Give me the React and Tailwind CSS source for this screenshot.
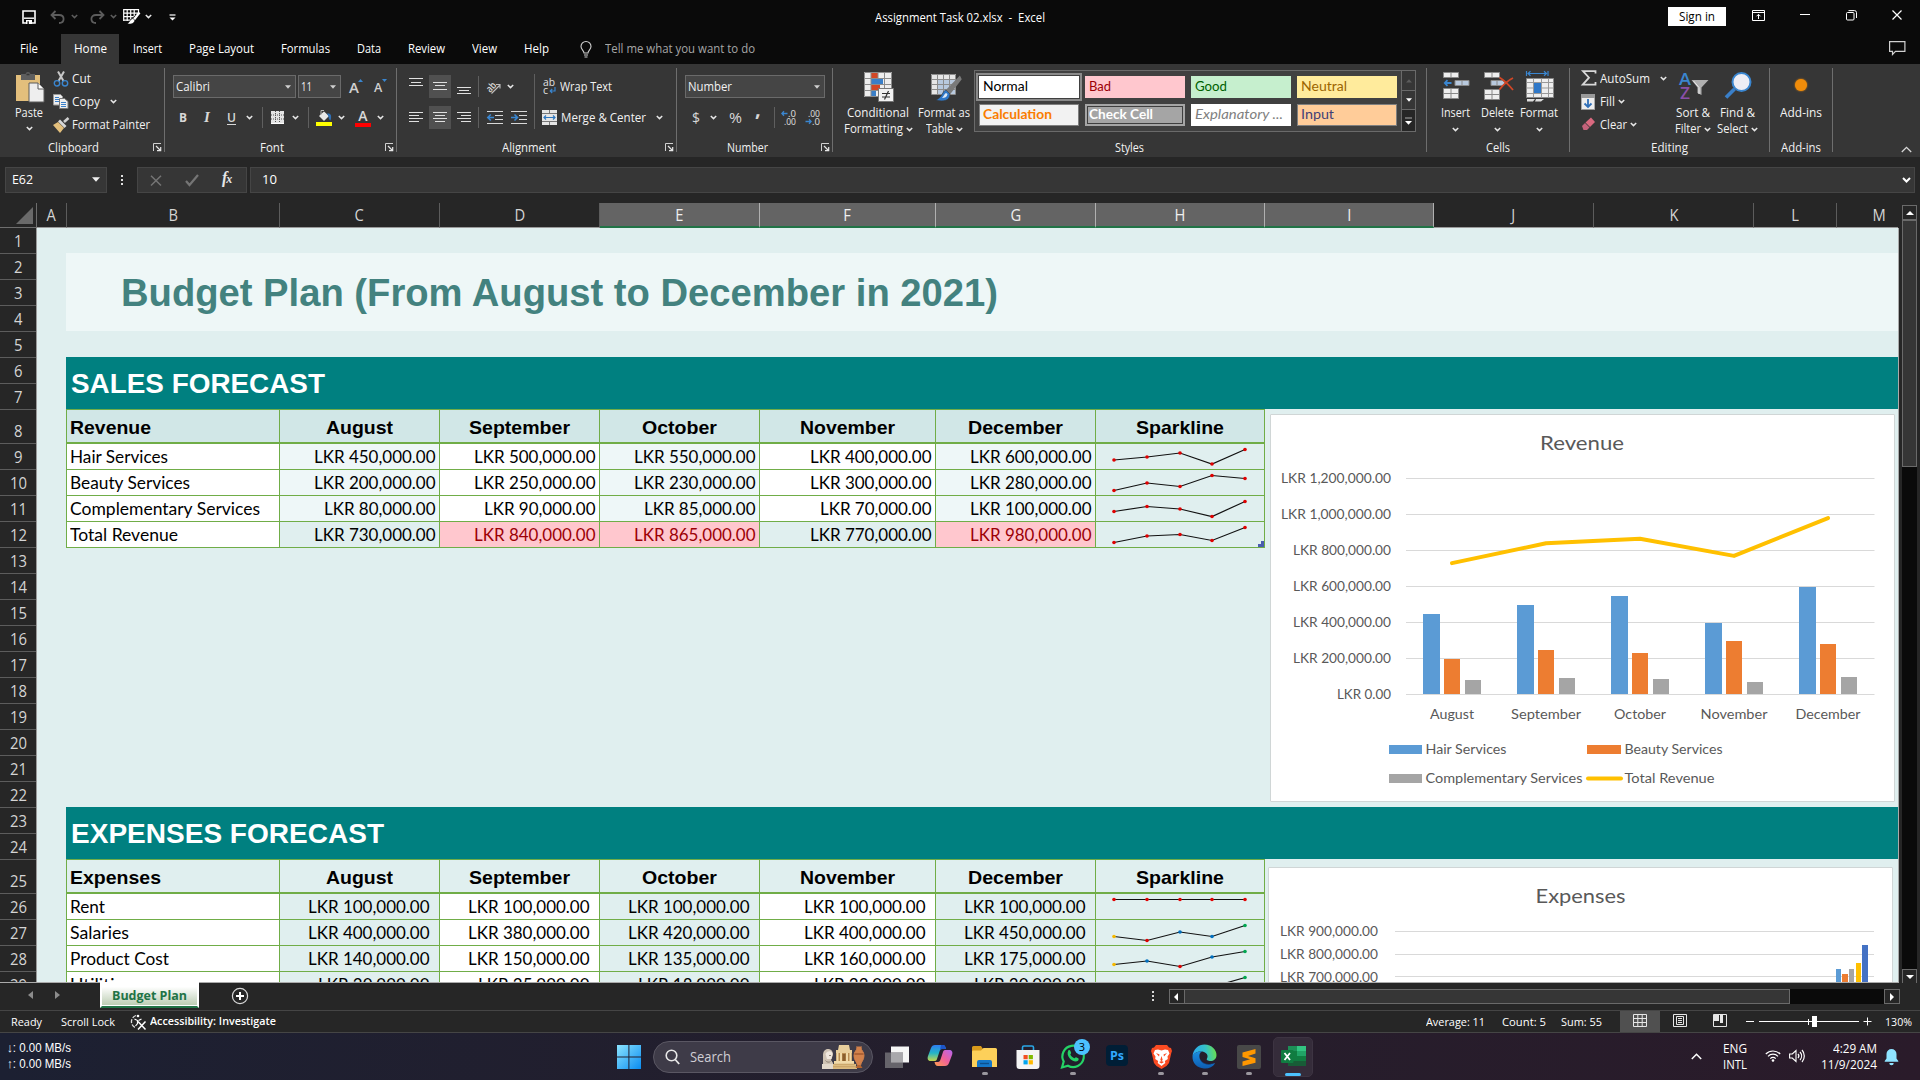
import React, { useLayoutEffect, useRef } from "react";

/* Single line of text, condensed or widened to fill the width given by its class. */
function T({ className = "", children }) {
  const outer = useRef(null);
  const inner = useRef(null);
  useLayoutEffect(() => {
    inner.current.style.transform = "none";
    const natural = inner.current.getBoundingClientRect().width;
    const wanted = outer.current.getBoundingClientRect().width;
    if (natural > 0) inner.current.style.transform = `scaleX(${wanted / natural})`;
  }, [children]);
  return (
    <span ref={outer} className={"inline-block shrink-0 whitespace-nowrap " + className}>
      <span ref={inner} className="inline-block origin-left whitespace-pre">{children}</span>
    </span>
  );
}

function Svg({ w, h, className = "", children }) {
  return (
    <svg width={w} height={h} viewBox={`0 0 ${w} ${h}`} fill="none" className={"block shrink-0 overflow-visible " + className}>
      {children}
    </svg>
  );
}

function Chev({ className = "", c = "#e6e6e6" }) {
  return (
    <Svg w={7} h={5} className={className}>
      <path d="M.8 1l2.7 2.6L6.2 1" stroke={c} strokeWidth="1.5" />
    </Svg>
  );
}

function Tri({ className = "", c = "#d0d0d0" }) {
  return (
    <Svg w={6} h={4} className={className}>
      <path d="M0 .3h6L3 3.8z" fill={c} />
    </Svg>
  );
}

/* ---------- title bar and tabs ---------- */

function TitleBar() {
  return (
    <div className="flex h-[34px] items-start bg-[#0a0a0a] text-[12px] text-white">
      <Svg w={14} h={14} className="ml-[22px] mt-[10px]">
        <path d="M1 1h12v12H1z" stroke="#fff" strokeWidth="1.6" />
        <path d="M2 8.2h10" stroke="#fff" strokeWidth="1.4" />
        <path d="M4 10h6v4H4z" fill="#fff" />
        <path d="M5.5 11.3h1.3V14H5.500z" fill="#0a0a0a" />
      </Svg>
      <Svg w={15} h={14} className="ml-[14px] mt-[10px]">
        <path d="M5.500 1L1.500 5l4 4M1.800 5H9c3 0 4.600 1.800 4.600 4S12 13 9 13" stroke="#5c5c5c" strokeWidth="1.800" />
      </Svg>
      <Chev className="ml-[6px] mt-[14px]" c="#5c5c5c" />
      <Svg w={15} h={14} className="ml-[12px] mt-[10px]">
        <path d="M9.500 1l4 4-4 4M13.200 5H6C3 5 1.400 6.800 1.400 9S3 13 6 13" stroke="#5c5c5c" strokeWidth="1.800" />
      </Svg>
      <Chev className="ml-[5px] mt-[14px]" c="#5c5c5c" />
      <Svg w={17} h={17} className="ml-[6px] mt-[8px]">
        <path d="M.7 1.700h15M.7 5.200h15M.7 8.700h10M.7 12.200h7M.7 1v12M4.200 1v12M7.700 1v10M11.200 1v7M15.500 1v4" stroke="#fff" strokeWidth="1.200" />
        <path d="M16.500 4.500l-5.500 7" stroke="#fff" strokeWidth="2.400" />
        <path d="M9.800 10.500c-2.500.5-3 3.500-5.300 5 2.500 1.300 7 .5 7.300-3.500z" fill="#fff" stroke="#0a0a0a" strokeWidth=".5" />
      </Svg>
      <Chev className="ml-[5px] mt-[14px]" />
      <Svg w={7} h={7} className="ml-[17px] mt-[14px]">
        <path d="M.5 1h6" stroke="#fff" strokeWidth="1.200" />
        <path d="M.5 3.500h6L3.500 6.500z" fill="#fff" />
      </Svg>
      <T className="ml-[699px] mt-[9px] w-[170px] leading-[17px]">{"Assignment Task 02.xlsx  -  Excel"}</T>
      <div className="ml-[623px] mt-[7px] flex h-[19px] w-[58px] items-center justify-center bg-white text-black">
        <T className="w-[36px] leading-[17px]">Sign in</T>
      </div>
      <Svg w={13} h={11} className="ml-[26px] mt-[10px]">
        <path d="M.5.5h12v10H.5zM.5 2.500h12" stroke="#fff" />
        <path d="M6.500 9V4.500M4.500 6.300l2-2 2 2" stroke="#fff" />
      </Svg>
      <div className="ml-[35px] mt-[14px] h-px w-[10px] bg-white" />
      <Svg w={11} h={11} className="ml-[36px] mt-[10px]">
        <rect x=".5" y="2.500" width="7.500" height="7.500" rx="1" stroke="#fff" />
        <path d="M2.500.6H8.500a2 2 0 0 1 2 2V8" stroke="#fff" />
      </Svg>
      <Svg w={10} h={10} className="ml-[35px] mt-[10px]">
        <path d="M.5.5l9 9M9.500.5l-9 9" stroke="#fff" strokeWidth="1.200" />
      </Svg>
    </div>
  );
}

function Tabs() {
  return (
    <div className="flex h-[30px] items-center bg-[#0a0a0a] text-[12px] leading-[30px] text-white">
      <T className="ml-[20px] w-[18px]">File</T>
      <div className="ml-[23px] flex h-[30px] w-[58px] justify-center bg-[#363636]">
        <T className="w-[33px]">Home</T>
      </div>
      <T className="ml-[14px] w-[29px]">Insert</T>
      <T className="ml-[27px] w-[65px]">Page Layout</T>
      <T className="ml-[27px] w-[49px]">Formulas</T>
      <T className="ml-[27px] w-[24px]">Data</T>
      <T className="ml-[27px] w-[37px]">Review</T>
      <T className="ml-[27px] w-[25px]">View</T>
      <T className="ml-[27px] w-[25px]">Help</T>
      <Svg w={12} h={17} className="ml-[31px]">
        <path d="M4 12c0-2.500-3-3.500-3-6.500a5 5 0 0 1 10 0c0 3-3 4-3 6.500zM4 14h4M4.500 16h3" stroke="#d0d0d0" strokeWidth="1.100" />
      </Svg>
      <T className="ml-[13px] w-[150px] text-[#a6a6a6]">Tell me what you want to do</T>
      <Svg w={17} h={15} className="ml-[1134px] mt-[-2px]">
        <path d="M.6.6h15.300v9.800H6.500L3.500 13.500v-3.100H.6z" stroke="#d0d0d0" strokeWidth="1.200" />
      </Svg>
    </div>
  );
}

/* ---------- ribbon ---------- */

function Group({ className, label, labelClass, launcher, children }) {
  return (
    <div className={"mt-[4px] flex h-[84px] shrink-0 flex-col border-r border-[#6e6e6e] " + className}>
      <div className="flex h-[75px] shrink-0 items-start">{children}</div>
      <div className="flex h-[9px] shrink-0 items-center leading-[10px]">
        <div className="flex flex-1 justify-center">
          <T className={labelClass}>{label}</T>
        </div>
        {launcher && (
          <Svg w={9} h={9} className="mr-[2px]">
            <path d="M.5 8V.5H8" stroke="#d0d0d0" />
            <path d="M3 3l4.500 4.500M7.700 4v3.700H4" stroke="#e6e6e6" strokeWidth="1.200" />
          </Svg>
        )}
      </div>
    </div>
  );
}

function VSep({ className = "" }) {
  return <div className={"h-[21px] w-px shrink-0 bg-[#5f5f5f] " + className} />;
}

function BigButton({ className, icon, line1, w1, line2, w2 }) {
  return (
    <div className={"flex shrink-0 flex-col items-center " + className}>
      <div className="mt-[3px] flex h-[32px] items-start justify-center">{icon}</div>
      <T className={"mt-[2px] leading-[16px] " + w1}>{line1}</T>
      <div className="flex h-[16px] items-center gap-[3px]">
        {line2 && <T className={"leading-[16px] " + w2}>{line2}</T>}
        <Chev />
      </div>
    </div>
  );
}

function Lines({ on, rows }) {
  return (
    <Svg w={22} h={23} className={on ? "bg-[#505050]" : ""}>
      {rows.map(([x1, x2, y]) => (
        <path key={y} d={`M${x1} ${y}H${x2}`} stroke="#e0e0e0" strokeWidth="1" />
      ))}
    </Svg>
  );
}

function Indent({ left }) {
  return (
    <Svg w={16} h={13}>
      <path d="M0 .5h16M8 4.500h8M8 8.500h8M0 12.500h16" stroke="#d8d8d8" />
      <path d={left ? "M7 6.500H1M3.800 3.500l-3 3 3 3" : "M0 6.500h6M3.500 3.500l3 3-3 3"} stroke="#3a86d0" strokeWidth="1.600" />
    </Svg>
  );
}

function ClipboardGroup() {
  return (
    <Group className="w-[165px]" label="Clipboard" labelClass="w-[51px] ml-[-7px]" launcher>
      <div className="ml-[12px] flex w-[34px] flex-col items-center">
        <Svg w={30} h={31} className="mt-[3px]">
          <path d="M2 4h24v26H2z" fill="#e3bf7c" />
          <path d="M7 3h4.500a2.600 2.600 0 0 1 5 0H21v6H7z" fill="#5e5e5e" />
          <path d="M12.500 3.500h3" stroke="#363636" strokeWidth="1.500" />
          <path d="M15 12h9l6 6v13H15z" fill="#eee" stroke="#5a5a5a" />
          <path d="M24 12v6h6" fill="#fff" stroke="#5a5a5a" />
        </Svg>
        <T className="mt-[3px] w-[28px] leading-[16px]">Paste</T>
        <Chev className="mt-[5px]" />
      </div>
      <div className="ml-[7px] mt-[-1px] flex flex-col">
        <div className="flex h-[23px] items-center">
          <Svg w={16} h={16}>
            <path d="M5 .5l5.500 9.500M11 .5L5.500 10" stroke="#c8c8c8" strokeWidth="2" />
            <circle cx="4" cy="12.300" r="2.700" stroke="#3a86d0" strokeWidth="1.400" />
            <circle cx="12" cy="12.300" r="2.700" stroke="#3a86d0" strokeWidth="1.400" />
          </Svg>
          <T className="ml-[3px] w-[19px]">Cut</T>
        </div>
        <div className="flex h-[23px] items-center">
          <Svg w={16} h={15}>
            <path d="M.5.5h7l2 2v8.500h-9z" fill="#eee" stroke="#999" />
            <path d="M2 3.500h4M2 5.500h4M2 7.500h4" stroke="#3a7fc8" />
            <path d="M6.500 4.500h5l3.500 3V14.500H6.500z" fill="#eee" stroke="#777" />
            <path d="M8 8.500h5M8 10.500h5M8 12.500h5" stroke="#3a7fc8" />
          </Svg>
          <T className="ml-[3px] w-[28px]">Copy</T>
          <Chev className="ml-[10px]" />
        </div>
        <div className="flex h-[23px] items-center">
          <Svg w={16} h={16}>
            <path d="M15.500 1l-4.500 4" stroke="#d0d0d0" strokeWidth="2.600" />
            <path d="M7 2.500l6.500 6.500-2 2L5 4.500z" fill="#d8d8d8" />
            <path d="M5 5l6 6-4 5L0 8z" fill="#e3bf7c" />
          </Svg>
          <T className="ml-[3px] w-[78px]">Format Painter</T>
        </div>
      </div>
    </Group>
  );
}

function FontGroup() {
  return (
    <Group className="w-[232px]" label="Font" labelClass="w-[24px] ml-[-6px]" launcher>
      <div className="ml-[8px] flex flex-col">
        <div className="mt-[7px] flex h-[23px] items-center">
          <div className="flex h-[23px] w-[123px] items-center justify-between border border-[#6a6a6a] bg-[#454545] pl-[2px] pr-[4px]">
            <T className="w-[34px]">Calibri</T>
            <Tri />
          </div>
          <div className="ml-[2px] flex h-[23px] w-[43px] items-center justify-between border border-[#6a6a6a] bg-[#454545] pl-[2px] pr-[4px]">
            <T className="w-[11px]">11</T>
            <Tri />
          </div>
          <div className="ml-[8px] flex h-[23px] w-[14px] items-start">
            <span className="mt-[3px] inline-block text-[15px] font-semibold leading-[18px] text-[#d0d0d0]">A</span>
            <Svg w={5} h={3} className="ml-[-1px] mt-[4px]"><path d="M0 3h5L2.500 0z" fill="#3a86d0" /></Svg>
          </div>
          <div className="ml-[11px] flex h-[23px] w-[14px] items-start">
            <span className="mt-[4px] inline-block text-[12.500px] font-semibold leading-[18px] text-[#d0d0d0]">A</span>
            <Svg w={5} h={3} className="mt-[4px]"><path d="M0 0h5L2.500 3z" fill="#3a86d0" /></Svg>
          </div>
        </div>
        <div className="mt-[8px] flex h-[23px] items-center text-[13px] text-[#d8d8d8]">
          <T className="ml-[6px] w-[8px] font-bold">B</T>
          <span className="ml-[17px] w-[7px] font-['Liberation_Serif'] text-[15px] font-bold italic">I</span>
          <T className="ml-[16px] w-[9px] border-b border-[#d8d8d8] font-semibold leading-[14px]">U</T>
          <Chev className="ml-[10px]" />
          <VSep className="ml-[9px]" />
          <Svg w={13} h={13} className="ml-[8px]">
            <path d="M0 0h13v13H0z" fill="#e4e4e4" />
            <path d="M0 4h13M0 8h13M4.500 0v11M8.500 0v11" stroke="#555" strokeWidth="1" strokeDasharray="1 1" />
            <path d="M0 12.500h13" stroke="#fff" />
          </Svg>
          <Chev className="ml-[8px]" />
          <VSep className="ml-[9px]" />
          <Svg w={16} h={17} className="ml-[7px]">
            <path d="M3 7l5-4.500L13 7l-5 5z" fill="#e8e8e8" />
            <path d="M5 6V1.500h3" stroke="#bbb" />
            <path d="M11 4.500c4-.5 5 2 3.500 7-1-.5-2-2-2-4z" fill="#2f6fb5" />
            <path d="M0 13h16v4H0z" fill="#ff0" />
          </Svg>
          <Chev className="ml-[6px]" />
          <div className="ml-[10px] flex w-[16px] flex-col items-center">
            <span className="text-[14px] font-semibold leading-[13px]">A</span>
            <div className="mt-px h-[4px] w-[16px] bg-[#f00]" />
          </div>
          <Chev className="ml-[6px]" />
        </div>
      </div>
    </Group>
  );
}

function AlignmentGroup() {
  return (
    <Group className="w-[280px]" label="Alignment" labelClass="w-[54px] ml-[-4px]" launcher>
      <div className="ml-[8px] flex w-[129px] flex-col">
        <div className="mt-[7px] flex h-[23px] items-center gap-[2px]">
          <Lines rows={[[4, 18, 3.5], [6, 16, 7.5], [4, 18, 10.5]]} />
          <Lines on rows={[[4, 18, 7.5], [6, 16, 10.5], [4, 18, 14.5]]} />
          <Lines rows={[[4, 18, 12.5], [6, 16, 15.5], [4, 18, 18.5]]} />
          <VSep className="ml-px" />
          <Svg w={16} h={16} className="ml-[5px]">
            <text x="0" y="11.500" transform="rotate(-48 5 8)" fontSize="10" fill="#d8d8d8" fontWeight="600" textLength="10" lengthAdjust="spacingAndGlyphs">ab</text>
            <path d="M5.500 14.500L13.500 6.500M10 5.500h4v4" stroke="#c0c0c0" strokeWidth="1.100" />
          </Svg>
          <Chev className="ml-[3px]" />
        </div>
        <div className="mt-[8px] flex h-[23px] items-center gap-[2px]">
          <Lines rows={[[4, 18, 6.5], [4, 14, 9.5], [4, 18, 12.5], [4, 14, 15.5]]} />
          <Lines on rows={[[4, 18, 6.5], [6, 16, 9.5], [4, 18, 12.5], [6, 16, 15.5]]} />
          <Lines rows={[[4, 18, 6.5], [8, 18, 9.5], [4, 18, 12.5], [8, 18, 15.5]]} />
          <VSep className="ml-px" />
          <div className="ml-[6px] flex gap-[8px]">
            <Indent left />
            <Indent />
          </div>
        </div>
      </div>
      <div className="mt-[6px] h-[55px] w-px bg-[#5f5f5f]" />
      <div className="flex flex-col">
        <div className="mt-[7px] flex h-[23px] items-center">
          <Svg w={14} h={16} className="ml-[8px] mt-[-2px]">
            <text x="0" y="7.500" fontSize="10.500" fill="#e0e0e0" textLength="12" lengthAdjust="spacingAndGlyphs">ab</text>
            <text x="0" y="15.500" fontSize="10.500" fill="#e0e0e0">c</text>
            <path d="M12 9v4H7.500M9.200 11l-2 2 2 2" stroke="#3a86d0" strokeWidth="1.200" />
          </Svg>
          <T className="ml-[3px] w-[52px]">Wrap Text</T>
        </div>
        <div className="mt-[8px] flex h-[23px] items-center">
          <Svg w={15} h={15} className="ml-[7px]">
            <path d="M0 0h15v15H0z" fill="#e6e6e6" />
            <path d="M0 3.500h15M0 11.500h15M7.500 0v3.500M7.500 11.500V15" stroke="#777" />
            <path d="M2 7.500h11M4 5.500l-2 2 2 2M11 5.500l2 2-2 2" stroke="#2f78c0" strokeWidth="1.200" />
          </Svg>
          <T className="ml-[4px] w-[85px]">Merge &amp; Center</T>
          <Chev className="ml-[10px]" />
        </div>
      </div>
    </Group>
  );
}

function NumberGroup() {
  return (
    <Group className="w-[156px]" label="Number" labelClass="w-[41px] ml-[-3px]" launcher>
      <div className="ml-[8px] flex flex-col">
        <div className="mt-[7px] flex h-[23px] w-[140px] items-center justify-between border border-[#6a6a6a] bg-[#454545] pl-[2px] pr-[4px]">
          <T className="w-[44px]">Number</T>
          <Tri />
        </div>
        <div className="mt-[8px] flex h-[23px] items-center text-[15px] text-[#d8d8d8]">
          <T className="ml-[7px] w-[8px]">$</T>
          <Chev className="ml-[10px]" />
          <T className="ml-[12px] w-[13px]">%</T>
          <span className="ml-[13px] mt-[-17px] w-[5px] text-[20px] font-bold leading-[20px]">,</span>
          <VSep className="ml-[14px]" />
          <Svg w={16} h={15} className="ml-[6px]">
            <text x="7" y="6.500" fontSize="9" fill="#e0e0e0" textLength="8" lengthAdjust="spacingAndGlyphs">.0</text>
            <text x="3" y="14.500" fontSize="9" fill="#e0e0e0" textLength="12" lengthAdjust="spacingAndGlyphs">.00</text>
            <path d="M6.500 3.500H1M3 1.300L.9 3.500 3 5.700" stroke="#3a86d0" strokeWidth="1.300" />
          </Svg>
          <Svg w={16} h={15} className="ml-[8px]">
            <text x="3" y="6.500" fontSize="9" fill="#e0e0e0" textLength="12" lengthAdjust="spacingAndGlyphs">.00</text>
            <text x="7" y="14.500" fontSize="9" fill="#e0e0e0" textLength="8" lengthAdjust="spacingAndGlyphs">.0</text>
            <path d="M.5 11.500h5.500M4 9.300l2.100 2.200L4 13.700" stroke="#3a86d0" strokeWidth="1.300" />
          </Svg>
        </div>
      </div>
    </Group>
  );
}

const styleCells = [
  ["Normal", "bg-white text-black outline outline-2 outline-offset-[1px] outline-[#8a8a8a]", "w-[45px]"],
  ["Bad", "bg-[#ffc7ce] text-[#9c0006]", "w-[22px]"],
  ["Good", "bg-[#c6efce] text-[#006100]", "w-[32px]"],
  ["Neutral", "bg-[#ffeb9c] text-[#9c6500]", "w-[46px]"],
  ["Calculation", "border border-[#7f7f7f] bg-[#f2f2f2] font-bold text-[#fa7d00]", "w-[69px]"],
  ["Check Cell", "border-[3px] border-double border-[#3f3f3f] bg-[#a5a5a5] outline outline-1 outline-[#a5a5a5] outline-offset-[-1px] font-bold text-white", "w-[64px]"],
  ["Explanatory ...", "bg-white italic text-[#7f7f7f]", "w-[88px]"],
  ["Input", "border border-[#7f7f7f] bg-[#ffcc99] text-[#3f3f76]", "w-[33px]"],
];

function StylesGroup() {
  return (
    <Group className="w-[594px]" label="Styles" labelClass="w-[29px] ml-[-1px]">
      <BigButton
        className="ml-[10px] w-[70px]"
        line1="Conditional" w1="w-[62px]" line2="Formatting" w2="w-[59px]"
        icon={
          <Svg w={31} h={31} className="ml-[3px]">
            <path d="M0 1h28v25H0z" fill="#eee" />
            <path d="M7 1h7v6H7zM7 14h9v6H7z" fill="#d24726" />
            <path d="M7 7.500h12v6H7z" fill="#3a7fc8" />
            <path d="M7 20h5v6H7z" fill="#3a7fc8" />
            <path d="M.5 1.500h27v24H.5zM0 7.500h28M0 13.500h28M0 19.500h28M7 1v25M14 1v6M20.500 1v25" stroke="#8c8c8c" />
            <path d="M14.500 17.500h15v13h-15z" fill="#f2f2f2" stroke="#777" />
            <path d="M18 22.500h8M18 26h8M24.500 20l-4 8.500" stroke="#333" strokeWidth="1.200" />
          </Svg>
        }
      />
      <BigButton
        className="ml-[5px] w-[52px]"
        line1="Format as" w1="w-[52px]" line2="Table" w2="w-[27px]"
        icon={
          <Svg w={30} h={31} className="ml-[4px]">
            <path d="M0 3h25v20H0z" fill="#e6e6e6" />
            <path d="M6 8h19v15H6z" fill="#b8c9de" />
            <path d="M.5 3.500h24v20H.5zM0 8.500h25M0 13.500h25M0 18.500h25M6.500 3v20M12.500 3v20M18.500 3v20" stroke="#8c8c8c" />
            <path d="M29 8L19 21l-2-2L28.500 7z" stroke="#7a7a7a" strokeWidth="3" />
            <path d="M15 19c-4 1-3 7-10 10 7 2 14 1 14-6z" fill="#2f78c8" stroke="#363636" strokeWidth=".6" />
            <path d="M15 22c-2 1-2 3-4 5 3 0 5-1 5.500-4z" fill="#dce9f7" />
          </Svg>
        }
      />
      <div className="ml-[4px] mt-[2px] flex h-[62px] w-[442px] border border-[#6a6a6a] bg-[#404040]">
        <div className="grid w-[426px] grid-cols-[100px_100px_100px_100px] grid-rows-[22px_22px] gap-x-[6px] gap-y-[6px] pl-[4px] pt-[5px]">
          {styleCells.map(([name, cls, w]) => (
            <div key={name} className={"box-border flex items-center overflow-visible " + cls}>
              <div className={cls.includes("border-[3px]") ? "pl-px" : cls.includes("border ") ? "pl-[3px]" : "pl-[4px]"}>
                <T className={"font-['Lato'] text-[13.500px] leading-[16px] " + w}>{name}</T>
              </div>
            </div>
          ))}
        </div>
        <div className="flex flex-1 flex-col border-l border-[#6a6a6a] bg-[#363636]">
          <div className="flex h-[20px] items-center justify-center border-b border-[#6a6a6a]">
            <Svg w={6} h={4}><path d="M0 3.500h6L3 .3z" fill="#5c5c5c" /></Svg>
          </div>
          <div className="flex h-[19px] items-center justify-center border-b border-[#6a6a6a]"><Tri c="#fff" /></div>
          <div className="flex h-[21px] items-center justify-center bg-[#262626]">
            <Svg w={7} h={8}><path d="M0 1h7" stroke="#aaa" /><path d="M0 4h7L3.500 7.800z" fill="#fff" /></Svg>
          </div>
        </div>
      </div>
    </Group>
  );
}

function CellsGroup() {
  return (
    <Group className="w-[143px]" label="Cells" labelClass="w-[24px]">
      <BigButton className="ml-[7px] w-[42px]" line1="Insert" w1="w-[29px]"
        icon={
          <Svg w={27} h={30} className="ml-[2px]">
            <path d="M.5 1.500h15v5H.5zM.5 17.500h15v10H.5z" fill="#eee" stroke="#888" />
            <path d="M8 1.500v5M8 17.500v10M.5 22.500h15" stroke="#888" />
            <path d="M12 9.500h14v5H12z" fill="#b8c9de" stroke="#888" />
            <path d="M19 9.500v5" stroke="#888" />
            <path d="M8.500 12H2M4.500 9.200L1.800 12l2.700 2.800" stroke="#3a86d0" strokeWidth="1.800" />
          </Svg>
        }
      />
      <BigButton className="w-[42px]" line1="Delete" w1="w-[33px]"
        icon={
          <Svg w={30} h={30} className="ml-[3px]">
            <path d="M.5 1.500h15v5H.5zM.5 18.500h15v10H.5z" fill="#eee" stroke="#888" />
            <path d="M8 1.500v5M8 18.500v10M.5 23.500h15" stroke="#888" />
            <path d="M7 9.500h12l2 2.500-2 2.500H7z" fill="#b8c9de" stroke="#888" />
            <path d="M13 9.500v5" stroke="#888" />
            <path d="M15.500 6.500c5 3 9 7 13.500 12.500M29 7c-6 3-10 7-13.500 11.500" stroke="#d24726" strokeWidth="1.800" />
          </Svg>
        }
      />
      <BigButton className="w-[42px]" line1="Format" w1="w-[38px]"
        icon={
          <Svg w={28} h={31} className="ml-[2px]">
            <path d="M.5 0v5M22 0v5M2 2.500h18.500M4.500.3L2 2.500l2.500 2.300M18 .3l2.500 2.200L18 4.800" stroke="#3a86d0" strokeWidth="1.200" />
            <path d="M.5 7.500h27v19H.5z" fill="#eee" stroke="#888" />
            <path d="M.5 11.500h27M.5 22.500h27M7.500 7.500v19M15.500 7.500v19M22.500 7.500v19M.5 17h7M15.500 17h12" stroke="#999" />
            <path d="M8 12h7v10H8z" fill="#2f78c8" />
            <path d="M1 28h8l-2 2.500H1zM10 28h8l-3 2.500H9z" fill="#ddd" />
          </Svg>
        }
      />
    </Group>
  );
}

function EditingGroup() {
  return (
    <Group className="w-[200px]" label="Editing" labelClass="w-[37px]">
      <div className="ml-[11px] mt-[-1px] flex w-[94px] flex-col">
        <div className="flex h-[23px] items-center">
          <Svg w={16} h={16} className="mt-[-1px]">
            <path d="M14.500 3.500V1.200H2l6 6.500-6.300 7h12.800V12" stroke="#d8d8d8" strokeWidth="1.800" />
          </Svg>
          <T className="ml-[3px] w-[50px]">AutoSum</T>
          <Chev className="ml-[10px]" />
        </div>
        <div className="flex h-[23px] items-center">
          <Svg w={14} h={16}>
            <path d="M0 0h14v16H0z" fill="#999" />
            <path d="M.8 4h12.400v11H.8z" fill="#eee" />
            <path d="M7 5v8M3.500 9.500L7 13l3.500-3.500" stroke="#2f6fb8" strokeWidth="1.800" />
          </Svg>
          <T className="ml-[5px] w-[15px]">Fill</T>
          <Chev className="ml-[3px]" />
        </div>
        <div className="flex h-[23px] items-center">
          <Svg w={14} h={14} className="ml-px mt-[-2px]">
            <path d="M9 .5L13 5 8 10 3.500 5.500z" fill="#d9697f" />
            <path d="M3 6l4.500 4.500L5 13H1.500L0 9z" fill="#c4627a" />
          </Svg>
          <T className="ml-[4px] w-[27px]">Clear</T>
          <Chev className="ml-[3px]" />
        </div>
      </div>
      <BigButton className="w-[36px]" line1="Sort &" w1="w-[34px]" line2="Filter" w2="w-[26px]"
        icon={
          <Svg w={30} h={31} className="ml-px">
            <text x="0" y="13.500" fontSize="16" fontWeight="600" fill="#3a86d0" textLength="12" lengthAdjust="spacingAndGlyphs">A</text>
            <text x="1" y="28" fontSize="16" fontWeight="600" fill="#8a4fa8" textLength="10" lengthAdjust="spacingAndGlyphs">Z</text>
            <path d="M12.500 9h17l-7 7.500V24l-4-2v-5.500z" fill="#b0b0b0" />
            <path d="M14.500 10l5.500 6.500V23" stroke="#eee" />
          </Svg>
        }
      />
      <BigButton className="ml-[6px] w-[40px]" line1="Find &" w1="w-[35px]" line2="Select" w2="w-[31px]"
        icon={
          <Svg w={28} h={30} className="ml-[2px]">
            <path d="M10.500 18L2 26.500" stroke="#3a7fc8" strokeWidth="3.800" />
            <circle cx="17.500" cy="11" r="9" fill="#ededf4" stroke="#3a86d0" strokeWidth="2" />
          </Svg>
        }
      />
    </Group>
  );
}

function Ribbon() {
  return (
    <div className="flex h-[93px] bg-[#363636] text-[12px] text-[#f2f2f2]">
      <ClipboardGroup />
      <FontGroup />
      <AlignmentGroup />
      <NumberGroup />
      <StylesGroup />
      <CellsGroup />
      <EditingGroup />
      <Group className="w-[63px]" label="Add-ins" labelClass="w-[40px]">
        <div className="flex w-[62px] flex-col items-center">
          <div className="mt-[11px] h-[12px] w-[12px] rounded-full bg-[#f08c0a] shadow-[0_0_2px_#f08c0a]" />
          <T className="mt-[14px] w-[42px] leading-[16px]">Add-ins</T>
        </div>
      </Group>
      <Svg w={11} h={7} className="ml-[68px] mt-[82px]">
        <path d="M.8 6l4.700-4.700L10.200 6" stroke="#d8d8d8" strokeWidth="1.300" />
      </Svg>
    </div>
  );
}

function FormulaBar() {
  return (
    <div className="flex h-[46px] items-start bg-[#262626] pt-[10px] text-[13px] text-white">
      <div className="ml-[5px] flex h-[26px] w-[102px] items-center justify-between border border-[#454545] bg-[#363636] pl-[6px] pr-[6px]">
        <T className="w-[21px]">E62</T>
        <Svg w={8} h={5} className="mt-[-2px]"><path d="M0 .3h8L4 4.800z" fill="#f0f0f0" /></Svg>
      </div>
      <div className="ml-[14px] mt-[8px] flex flex-col gap-[2px]">
        <div className="h-[2px] w-[2px] bg-[#e0e0e0]" />
        <div className="h-[2px] w-[2px] bg-[#e0e0e0]" />
        <div className="h-[2px] w-[2px] bg-[#e0e0e0]" />
      </div>
      <div className="ml-[14px] flex h-[26px] w-[110px] items-center border border-[#454545] bg-[#363636]">
        <Svg w={12} h={11} className="ml-[12px]"><path d="M1 .8l10 9.700M11 .8L1 10.500" stroke="#757575" strokeWidth="1.500" /></Svg>
        <Svg w={14} h={12} className="ml-[23px]"><path d="M1 7l3.500 4L13 1" stroke="#757575" strokeWidth="2.200" /></Svg>
        <span className="ml-[23px] mt-[-3px] font-['Liberation_Serif'] text-[16px] font-bold italic leading-[20px] tracking-[-1px] text-[#e6e6e6]">
          f<span className="text-[12px]">x</span>
        </span>
      </div>
      <div className="ml-[3px] flex h-[26px] w-[1665px] items-center justify-between border border-[#454545] bg-[#363636] pl-[11px] pr-[3px]">
        <T className="w-[15px]">10</T>
        <Svg w={9} h={6}><path d="M1 1l3.500 3.500L8 1" stroke="#fff" strokeWidth="2" /></Svg>
      </div>
    </div>
  );
}

/* ---------- sheet ---------- */

const columns = [
  ["A", "w-[30px]", false], ["B", "w-[213px]", false], ["C", "w-[160px]", false], ["D", "w-[160px]", false],
  ["E", "w-[160px]", true], ["F", "w-[176px]", true], ["G", "w-[160px]", true], ["H", "w-[169px]", true],
  ["I", "w-[169px]", true], ["J", "w-[160px]", false], ["K", "w-[160px]", false], ["L", "w-[83px]", false],
];

function ColumnHeaders() {
  return (
    <div className="flex h-[25px] bg-[#262626] text-[16px] leading-[24px]">
      <div className="flex w-[37px] justify-end border-b border-r border-[#6e6e6e] pr-[3px] pt-[4px]">
        <Svg w={17} h={17}><path d="M17 0v17H0z" fill="#6a6a6a" /></Svg>
      </div>
      {columns.map(([name, w, on]) => (
        <div
          key={name}
          className={
            "flex justify-center border-r " + w +
            (on ? " border-b-2 border-b-[#217346] border-r-[#b0b0b0] bg-[#646464] text-[#f0f0f0]" : " border-b border-b-[#9a9a9a] border-r-[#5c5c5c] text-[#d4d4d4]")
          }
        >
          <span className="inline-block scale-x-[0.92]">{name}</span>
        </div>
      ))}
      <div className="flex w-[61px] justify-end border-b border-[#9a9a9a] pr-[12px] text-[#d4d4d4]">
        <span className="inline-block scale-x-[0.92]">M</span>
      </div>
    </div>
  );
}

function RowHeaders() {
  return (
    <div className="flex w-[37px] shrink-0 flex-col border-r border-[#9a9a9a] bg-[#262626] text-[16.500px] text-[#d4d4d4]">
      {Array.from({ length: 29 }, (_, i) => i + 1).map((n) => (
        <div
          key={n}
          className={
            "flex shrink-0 items-end justify-center border-b border-[#5c5c5c] leading-[24px] " +
            (n === 8 || n === 25 ? "h-[34px]" : "h-[26px]")
          }
        >
          <T className={n < 10 ? "w-[8.500px]" : "w-[17px]"}>{String(n)}</T>
        </div>
      ))}
    </div>
  );
}

const shade = { n: "bg-white", l: "bg-[#eef7f8]", m: "bg-[#e0efef]", r: "bg-[#ffc7ce] text-[#9c0006]" };
const R = "#e00000", Y = "#f5b800", B = "#0070c0", G = "#00a650";

const revenue = [
  ["Hair Services", "w-[98px]", ["450,000", "500,000", "550,000", "400,000", "600,000"], "lnlnl", [16, 13, 9, 20, 5.5], [R, R, R, R, R]],
  ["Beauty Services", "w-[120px]", ["200,000", "250,000", "230,000", "300,000", "280,000"], "lnlnl", [20.5, 13, 16.5, 5.5, 8.5], [R, R, R, R, R]],
  ["Complementary Services", "w-[190px]", ["80,000", "90,000", "85,000", "70,000", "100,000"], "lnlnl", [15.5, 10.5, 13, 20.5, 5.5], [R, R, R, R, R]],
  ["Total Revenue", "w-[108px]", ["730,000", "840,000", "865,000", "770,000", "980,000"], "mrrmr", [20.5, 14, 12.5, 18.5, 5.5], [R, R, R, R, R]],
];

const expenses = [
  ["Rent", "w-[35px]", ["100,000", "100,000", "100,000", "100,000", "100,000"], "mnmnm", [5.5, 5.5, 5.5, 5.5, 5.5], [R, R, R, R, R]],
  ["Salaries", "w-[59px]", ["400,000", "380,000", "420,000", "400,000", "450,000"], "mnmnm", [16.5, 20.5, 12, 16.5, 5.5], [Y, R, B, B, G]],
  ["Product Cost", "w-[99px]", ["140,000", "150,000", "135,000", "160,000", "175,000"], "mnmnm", [18.5, 15, 20.5, 11, 5.5], [Y, B, R, B, G]],
  ["Utilities", "w-[62px]", ["20,000", "25,000", "18,000", "22,000", "30,000"], "mnmnm", [18, 12, 20.5, 15, 5.5], [Y, B, R, B, G]],
];

const heads = [["August", "w-[67px]"], ["September", "w-[101px]"], ["October", "w-[75px]"], ["November", "w-[95px]"], ["December", "w-[95px]"], ["Sparkline", "w-[88px]"]];

function Sparkline({ ys, dots }) {
  const xs = [18, 51, 84, 116, 149];
  return (
    <Svg w={168} h={25}>
      <polyline points={xs.map((x, i) => `${x},${ys[i]}`).join(" ")} stroke="#111" strokeWidth="1.200" />
      {xs.map((x, i) => <circle key={x} cx={x} cy={ys[i]} r="1.800" fill={dots[i]} />)}
    </Svg>
  );
}

function Table({ title, titleW, rows, headBg, pad, handle }) {
  return (
    <div className="ml-[-1px] grid w-[1199px] shrink-0 grid-cols-[213px_160px_160px_160px_176px_160px_169px] self-start border-l border-t border-[#70ad47] font-['Lato'] text-[17px] text-black">
      <div className={"flex h-[34px] border-b-2 border-r border-[#70ad47] pl-[3px] font-['Liberation_Sans'] text-[19px] font-bold leading-[35px] " + headBg}>
        <T className={titleW}>{title}</T>
      </div>
      {heads.map(([name, w]) => (
        <div key={name} className={"flex h-[34px] justify-center border-b-2 border-r border-[#70ad47] font-['Liberation_Sans'] text-[19px] font-bold leading-[35px] " + headBg}>
          <T className={w}>{name}</T>
        </div>
      ))}
      {rows.map(([name, w, vals, sh, ys, dots]) => (
        <React.Fragment key={name}>
          <div className="flex h-[26px] border-b border-r border-[#70ad47] bg-white pl-[3px] leading-[26px]">
            <T className={w}>{name}</T>
          </div>
          {vals.map((v, i) => (
            <div key={i} className={"flex h-[26px] justify-end border-b border-r border-[#70ad47] leading-[26px] " + pad + " " + shade[sh[i]]}>
              <T className={v.length > 6 ? "w-[121.500px]" : "w-[111.500px]"}>{`LKR ${v}.00`}</T>
            </div>
          ))}
          <div className="relative h-[26px] border-b border-r border-[#70ad47] bg-[#e0efef]">
            <Sparkline ys={ys} dots={dots} />
            {handle && name === "Total Revenue" && (
              <Svg w={6} h={6} className="absolute bottom-0 right-0"><path d="M3 0h3v6H0V3h3z" fill="#4a5cb0" /></Svg>
            )}
          </div>
        </React.Fragment>
      ))}
    </div>
  );
}

const months = [["August", 44], ["September", 70], ["October", 52], ["November", 67], ["December", 65]];
const series = [
  ["#5b9bd5", 153, 17, [450, 500, 550, 400, 600]],
  ["#ed7d31", 174, 16, [200, 250, 230, 300, 280]],
  ["#a5a5a5", 195, 16, [80, 90, 85, 70, 100]],
];
const totals = [730, 840, 865, 770, 980];

function CT({ x, y, w, end, mid, size = 13.5, children }) {
  const left = end ? x - w : mid ? x - w / 2 : x;
  return (
    <text x={left} y={y} textLength={w} lengthAdjust="spacingAndGlyphs" fontSize={size} fill="#595959">{children}</text>
  );
}

function RevenueChart() {
  const base = 280.5;
  return (
    <div className="ml-[5px] mt-[5px] h-[388px] w-[625px] shrink-0 bg-white font-['Lato']">
      <Svg w={625} h={388}>
        <path d="M.5.5h624v387H.5z" stroke="#d0d6d6" />
        <CT x={312} y={36} w={84} mid size={20}>Revenue</CT>
        {["1,200,000", "1,000,000", "800,000", "600,000", "400,000", "200,000", "0"].map((v, i) => (
          <g key={v}>
            <path d={`M136 ${64.5 + i * 36}H604.500`} stroke="#d9d9d9" />
            <CT x={121} y={69 + i * 36} w={v.length > 7 ? 110 : v.length > 1 ? 98 : 54} end>{`LKR ${v}.00`}</CT>
          </g>
        ))}
        {series.map(([c, x, w, vals]) =>
          vals.map((v, i) => <rect key={c + i} x={x + i * 94} y={Math.round(base - v * 0.18)} width={w} height={280 - Math.round(base - v * 0.18)} fill={c} />)
        )}
        <polyline points={totals.map((v, i) => `${182 + i * 94},${base - v * 0.18}`).join(" ")} stroke="#ffc000" strokeWidth="4" strokeLinecap="round" strokeLinejoin="round" />
        {months.map(([m, w], i) => <CT key={m} x={182 + i * 94} y={305} w={w} mid>{m}</CT>)}
        <rect x="119" y="331" width="33" height="9" fill="#5b9bd5" />
        <CT x={155.5} y={340} w={81}>Hair Services</CT>
        <rect x="317" y="331" width="34" height="9" fill="#ed7d31" />
        <CT x={354.500} y={340} w={98}>Beauty Services</CT>
        <rect x="119" y="360" width="33" height="9" fill="#a5a5a5" />
        <CT x={155.5} y={369} w={157}>Complementary Services</CT>
        <path d="M318 364.500h33" stroke="#ffc000" strokeWidth="4" strokeLinecap="round" />
        <CT x={354.500} y={369} w={90}>Total Revenue</CT>
      </Svg>
    </div>
  );
}

function ExpensesChart() {
  return (
    <div className="ml-[3px] mt-[8px] h-[388px] w-[625px] shrink-0 bg-white font-['Lato']">
      <Svg w={625} h={388}>
        <path d="M.5.5h624v387H.5z" stroke="#d0d6d6" />
        <CT x={312.5} y={36} w={90} mid size={20}>Expenses</CT>
        {["900,000", "800,000", "700,000"].map((v, i) => (
          <g key={v}>
            <path d={`M127 ${64.5 + Math.round(i * 22.6)}H606`} stroke="#d9d9d9" />
            <CT x={110} y={69 + i * 23} w={98} end>{`LKR ${v}.00`}</CT>
          </g>
        ))}
        <rect x="568" y="102" width="5" height="60" fill="#5b9bd5" />
        <rect x="574" y="107" width="6" height="60" fill="#ed7d31" />
        <rect x="581" y="102" width="5" height="60" fill="#a5a5a5" />
        <rect x="588" y="96" width="5" height="60" fill="#ffc000" />
        <rect x="594" y="78" width="6" height="80" fill="#4472c4" />
      </Svg>
    </div>
  );
}

function Band({ w, children }) {
  return (
    <div className="ml-[29px] flex h-[52px] shrink-0 items-center bg-[#008080] pl-[5px] pt-[2px] font-['Liberation_Sans'] text-[27px] font-bold leading-[30px] text-white">
      <T className={w}>{children}</T>
    </div>
  );
}

function Sheet() {
  return (
    <div className="flex h-[755px] w-[1899px] overflow-hidden border-b border-r border-[#ababab] bg-[#e0efef]">
      <RowHeaders />
      <div className="flex w-[1861px] flex-col">
        <div className="ml-[29px] mt-[25px] flex h-[78px] shrink-0 items-center bg-[#eef7f7] pl-[55px] pt-[2px] font-['Liberation_Sans'] text-[38px] font-bold leading-[44px] text-[#43827f]">
          <T className="w-[877px]">Budget Plan (From August to December in 2021)</T>
        </div>
        <div className="h-[26px] shrink-0" />
        <Band w="w-[254px]">SALES FORECAST</Band>
        <div className="ml-[30px] flex h-[398px] shrink-0">
          <Table title="Revenue" titleW="w-[81px]" rows={revenue} headBg="bg-[#d1e7e7]" pad="pr-[4px]" handle />
          <RevenueChart />
        </div>
        <Band w="w-[313px]">EXPENSES FORECAST</Band>
        <div className="ml-[30px] flex h-[398px] shrink-0">
          <Table title="Expenses" titleW="w-[91px]" rows={expenses} headBg="bg-[#e0efef]" pad="pr-[10px]" />
          <ExpensesChart />
        </div>
      </div>
    </div>
  );
}

function ScrollButton({ className, d }) {
  return (
    <div className={"flex shrink-0 items-center justify-center border border-[#6a6a6a] bg-[#262626] " + className}>
      <Svg w={8} h={8}><path d={d} fill="#fff" /></Svg>
    </div>
  );
}

function SheetTabs() {
  return (
    <div className="flex h-[28px] items-start border-b border-[#454545] bg-[#262626]">
      <Svg w={5} h={8} className="ml-[28px] mt-[8px]"><path d="M5 0v8L0 4z" fill="#8c8c8c" /></Svg>
      <Svg w={5} h={8} className="ml-[22px] mt-[8px]"><path d="M0 0v8l5-4z" fill="#8c8c8c" /></Svg>
      <div className="mt-[-1px] ml-[40px] flex h-[26px] w-[99px] justify-center border-x-2 border-b-2 border-x-white border-b-[#217346] bg-gradient-to-b from-white from-20% to-[#b9cbb0] shadow-[inset_0_-1px_0_#fff] pt-[3px] text-[13px] font-bold leading-[20px] text-[#217346]">
        <T className="w-[75px]">Budget Plan</T>
      </div>
      <Svg w={18} h={18} className="ml-[32px] mt-[4px]">
        <circle cx="9" cy="9" r="7.600" stroke="#d8d8d8" strokeWidth="1.200" />
        <path d="M9 5v8M5 9h8" stroke="#fff" strokeWidth="2" />
      </Svg>
      <div className="ml-[903px] mt-[8px] flex flex-col gap-[2px]">
        <div className="h-[2px] w-[2px] bg-[#d8d8d8]" />
        <div className="h-[2px] w-[2px] bg-[#d8d8d8]" />
        <div className="h-[2px] w-[2px] bg-[#d8d8d8]" />
      </div>
      <div className="ml-[15px] mt-[6px] flex h-[15px] bg-[#0a0a0a]">
        <ScrollButton className="w-[16px]" d="M5 0v8L1 4z" />
        <div className="ml-[-1px] w-[606px] border border-[#6a6a6a] bg-[#363636]" />
        <div className="w-[94px]" />
        <ScrollButton className="w-[16px]" d="M2 0v8l4-4z" />
      </div>
    </div>
  );
}

function StatusBar() {
  return (
    <div className="flex h-[22px] items-center border-b border-[#454545] bg-[#262626] text-[11.500px] leading-[21px] text-white">
      <T className="ml-[11px] w-[31px]">Ready</T>
      <T className="ml-[19px] w-[54px]">Scroll Lock</T>
      <Svg w={17} h={16} className="ml-[15px]">
        <path d="M6 1.500A6.500 6.500 0 0 0 5 13.500" stroke="#e0e0e0" strokeWidth="1.300" strokeDasharray="4 1.500" />
        <circle cx="8" cy="2" r="1.300" fill="#fff" />
        <path d="M4.500 5l3 1.500v3L5.500 12M11.500 5l-3 1.500" stroke="#fff" strokeWidth="1.200" />
        <path d="M8 7.500l7.500 8M15.500 7.500L8 15.500" stroke="#fff" strokeWidth="1.500" />
      </Svg>
      <T className="ml-[3px] mt-[-2px] w-[126px] font-semibold">Accessibility: Investigate</T>
      <T className="ml-[1150px] w-[59px]">Average: 11</T>
      <T className="ml-[17px] w-[44px]">Count: 5</T>
      <T className="ml-[15px] w-[41px]">Sum: 55</T>
      <div className="ml-[18px] flex h-[21px] w-[40px] items-center justify-center bg-[#505050]">
        <Svg w={14} h={13} className="mt-[-2px]"><path d="M.5.5h13v12H.5zM.5 4.500h13M.5 8.500h13M4.800.5v12M9.200.5v12" stroke="#e6e6e6" /></Svg>
      </div>
      <Svg w={14} h={13} className="ml-[13px] mt-[-2px]">
        <path d="M.5.5h13v12H.5z" stroke="#e6e6e6" />
        <path d="M3.500 2.500h7v8h-7zM5 4.500h4M5 6.500h4M5 8.500h4" stroke="#e6e6e6" />
      </Svg>
      <Svg w={14} h={13} className="ml-[26px] mt-[-2px]">
        <path d="M.5.5h13v12H.5z" stroke="#e6e6e6" />
        <path d="M1 1h5v6H1zM7 1h3v8H7z" fill="#e6e6e6" />
      </Svg>
      <div className="ml-[19px] h-px w-[8px] bg-white" />
      <div className="ml-[5px] flex h-[11px] w-[100px] items-center">
        <div className="h-px w-[49px] bg-white" />
        <div className="h-[6px] w-px bg-white" />
        <div className="h-px w-[3px] bg-white" />
        <div className="h-[11px] w-[5px] bg-white" />
        <div className="h-px w-[42px] bg-white" />
      </div>
      <Svg w={9} h={9} className="ml-[4px]"><path d="M4.500.5v8M.5 4.500h8" stroke="#fff" /></Svg>
      <T className="ml-[13px] mt-[-1px] w-[27px]">130%</T>
    </div>
  );
}

/* ---------- taskbar ---------- */

function TaskIcon({ className, dot, children }) {
  return (
    <div className={"relative flex h-[47px] shrink-0 items-center justify-center " + className}>
      {children}
      {dot && <div className="absolute bottom-[5px] left-1/2 h-[3px] w-[6px] -translate-x-1/2 rounded-full bg-[#9a979e]" />}
    </div>
  );
}

function Taskbar() {
  return (
    <div className="flex h-[47px] items-center bg-gradient-to-r from-[#1c2032] via-[#241e2c] to-[#2a1b2a] text-[12px] text-white">
      <div className="ml-[7px] mb-px flex flex-col font-['Liberation_Sans'] text-[13px] leading-[16px]">
        <T className="w-[64px]">↓: 0.00 MB/s</T>
        <T className="w-[64px]">↑: 0.00 MB/s</T>
      </div>
      <Svg w={24} h={24} className="ml-[546px]">
        <defs>
          <linearGradient id="win" x1="0" y1="0" x2="1" y2="1"><stop stopColor="#8be4ff" /><stop offset="1" stopColor="#0a8cf0" /></linearGradient>
        </defs>
        <path d="M0 0h11.400v11.400H0zM12.400 0H24v11.400H12.400zM0 12.400h11.400V24H0zM12.400 12.400H24V24H12.400z" fill="url(#win)" />
      </Svg>
      <div className="ml-[12px] flex h-[32px] w-[220px] items-center rounded-full border border-[#5a5763] bg-[#3e3b48]">
        <Svg w={15} h={16} className="ml-[11px]">
          <circle cx="6.500" cy="6.500" r="5.300" stroke="#e8e8e8" strokeWidth="1.600" />
          <path d="M10.200 10.500l4 4.500" stroke="#e8e8e8" strokeWidth="1.800" />
        </Svg>
        <T className="ml-[10px] w-[41px] text-[14px] text-[#d0ced4]">Search</T>
        <Svg w={44} h={26} className="ml-[91px]">
          <path d="M1 12c0-5 2-7 5-7s5 2 5 6l-2 5 2 3v4H1z" fill="#cfc3b4" />
          <path d="M3.500 10c1-3 5-4 7-1l-1 6H5z" fill="#f0e8de" />
          <path d="M7 11.500h2M3.500 16.500c1 2 4 2 5 1" stroke="#8f8377" />
          <path d="M0 20h12v5H0z" fill="#e3d9cc" />
          <path d="M17 1h10l1 5H16zM14 6h16v3H14z" fill="#e9cf9c" />
          <path d="M14 9h16v8H14z" fill="#b98d52" />
          <path d="M15.500 9v8M19 9v8M25 9v8M28.500 9v8" stroke="#f0d9a8" strokeWidth="2" />
          <path d="M20.500 10h3v7h-3z" fill="#8a5e2e" />
          <path d="M12 17h20v3H12z" fill="#f0d9a8" />
          <path d="M11 20h23v2.500H11zM11 22.500h24V25H11z" fill="#dcbb80" />
          <path d="M12 20.200h21M11 22.700h23" stroke="#b98d52" strokeWidth=".6" />
          <path d="M34 3h6M35 3.500c0 3-3 4-3 8 0 5 3 6 3.500 10h3c.5-4 3.500-5 3.500-10 0-4-3-5-3-8z" fill="#d2814b" stroke="#d2814b" />
          <path d="M32.500 10h9" stroke="#8c4520" />
          <path d="M33.500 24h7l-2-3h-3z" fill="#b5652f" />
        </Svg>
      </div>
      <TaskIcon className="ml-[12px] w-[24px]">
        <Svg w={24} h={24}>
          <path d="M6 1.500h18v16H6z" fill="#f5f5f5" />
          <path d="M0 7.500h18v15.500H0z" fill="#6e6c72" opacity=".9" />
          <path d="M6 7.500h12v10H6z" fill="#a8a7ab" />
        </Svg>
      </TaskIcon>
      <TaskIcon className="ml-[18px] w-[26px]">
        <Svg w={26} h={23} className="mb-[2px]">
          <defs>
            <linearGradient id="cp1" x1="0" y1="0" x2="0" y2="1"><stop stopColor="#2f7cf0" /><stop offset=".5" stopColor="#23b5c8" /><stop offset="1" stopColor="#c6d74a" /></linearGradient>
            <linearGradient id="cp2" x1="1" y1="0" x2="0" y2="1"><stop stopColor="#b566f0" /><stop offset=".5" stopColor="#f0609a" /><stop offset="1" stopColor="#ffa04a" /></linearGradient>
          </defs>
          <path d="M8 1h8c2 0 2.500 2 3 4h-4c-1.500 0-2 1-2.500 2.500L10 15c-.5 1.500-1 2-3 2H4c-3 0-4-2-3-5l3-8c.7-2 2-3 4-3z" fill="url(#cp1)" />
          <path d="M18 22h-7c-2.500 0-3-2-3.500-4H11c1.500 0 2-1 2.500-2.500L16 8c.5-1.500 1-2 3-2h3c3 0 4 2 3 5l-3 8c-.7 2-2 3-4 3z" fill="url(#cp2)" />
          <path d="M16 1c2 0 2.500 2 3 4h-4c-1 0-1.800.6-2.200 1.700L14 1z" fill="#1d55c8" />
        </Svg>
      </TaskIcon>
      <TaskIcon className="ml-[19px] w-[25px]" dot>
        <Svg w={25} h={23} className="mb-px">
          <path d="M0 2.500A1.500 1.500 0 0 1 1.500 1H9l2 3h12a2 2 0 0 1 2 2v3H0z" fill="#d99a1c" />
          <path d="M0 7c0-1 .5-1.500 1.500-1.500H9L11.500 3H23.500A1.500 1.500 0 0 1 25 4.500V22H0z" fill="#fdd05a" />
          <path d="M5 22v-5a2 2 0 0 1 2-2h11a2 2 0 0 1 2 2v5z" fill="#1577c8" />
          <path d="M8 18.500h9" stroke="#0d4f8c" strokeWidth="1.400" />
        </Svg>
      </TaskIcon>
      <TaskIcon className="ml-[19px] w-[24px]">
        <Svg w={24} h={24}>
          <path d="M6.500 6V2.500A1.500 1.500 0 0 1 8 1h8a1.500 1.500 0 0 1 1.500 1.500V6" stroke="#2aa8e8" strokeWidth="1.600" />
          <path d="M.5 5h23v16a3 3 0 0 1-3 3h-17a3 3 0 0 1-3-3z" fill="#f4f4f4" />
          <path d="M7.500 10h4.200v4.200H7.500z" fill="#f25022" />
          <path d="M12.700 10h4.200v4.200h-4.200z" fill="#7fba00" />
          <path d="M7.500 15.200h4.200v4.200H7.500z" fill="#00a4ef" />
          <path d="M12.700 15.200h4.200v4.200h-4.200z" fill="#ffb900" />
        </Svg>
      </TaskIcon>
      <TaskIcon className="ml-[20px] w-[25px]" dot>
        <Svg w={25} h={25}>
          <path d="M2 23.500l1.700-6A10.700 10.700 0 1 1 8 21.800z" stroke="#25d366" strokeWidth="2.200" fill="#211f2c" />
          <path d="M8.300 6.500c.8-.7 1.700-.4 2 .3l.8 2c.2.600-.8 1.500-.8 1.800.8 1.700 2.300 3 4 3.700.4 0 1.200-1.300 1.800-1l2.100 1c.7.300.6 1.600-.2 2.400-3.500 3.300-13-4-9.700-10.200z" fill="#25d366" />
        </Svg>
        <div className="absolute left-[14px] top-[6px] flex h-[16px] w-[16px] items-center justify-center rounded-full bg-[#4cc2ff] text-[11px] leading-[16px] text-black">3</div>
      </TaskIcon>
      <TaskIcon className="ml-[21px] w-[22px]">
        <div className="mb-[2px] flex h-[21px] w-[22px] items-center justify-center rounded-[4px] bg-[#001e36] text-[12px] font-bold leading-[20px] text-[#31a8ff]">
          <T className="w-[14px]">Ps</T>
        </div>
      </TaskIcon>
      <TaskIcon className="ml-[22px] w-[22px]" dot>
        <Svg w={21} h={24}>
          <path d="M5 0h11l2 2.500 2 .5 1 3-.7 2L18 18l-2.500 3-5 3-5-3L3 18 .7 8 0 6l1-3 2-.5z" fill="#fb4b22" />
          <path d="M4 5l3-.5 3.500 1 3.500-1 3 .5 1.500 3.500-2 3 .3 2.500-3 2 .5 2-3.800 3-3.800-3 .5-2-3-2 .3-2.500-2-3z" fill="#fff" />
          <path d="M5 8l3.500 1.500-.5 2zM16 8l-3.500 1.500.5 2zM10.500 11l1.200 4-1.200 1.200L9.300 15zM8 17l2.500-1L13 17l-2.500 1.500z" fill="#fb4b22" />
        </Svg>
      </TaskIcon>
      <TaskIcon className="ml-[20px] w-[25px]" dot>
        <Svg w={25} h={25}>
          <defs>
            <linearGradient id="ed1" x1="0" y1=".4" x2="1" y2=".3"><stop stopColor="#2aa8f0" /><stop offset=".55" stopColor="#35c1c8" /><stop offset="1" stopColor="#6be04a" /></linearGradient>
            <linearGradient id="ed2" x1="0" y1="0" x2="0" y2="1"><stop stopColor="#1a8ee0" /><stop offset="1" stopColor="#0e5cb0" /></linearGradient>
          </defs>
          <path d="M.5 12.500C1 5 6.500.5 12.500.5c7.500 0 12 5.500 12 10.500 0 4-3 6-6 6-2.500 0-4.500-1-3.500-2.500 1-1.800 1-5-3-6.500C7.500 6.500 2 8.500.5 12.500z" fill="url(#ed1)" />
          <path d="M.5 12.500C2 8.500 6.500 7 10 7.500 7.500 8.500 7 11 7.500 13.500c1 5 6 8 12.500 6.500 1.500-.5 2.500-1 3-.5-2.500 4-7 5.500-11 5C5 24 .2 19 .5 12.500z" fill="url(#ed2)" />
          <path d="M10 8c-3 2-3 6-1 8.500 3 4 8.500 4.500 13 2-2 2-7 3-10.500 1C7 17.500 6.500 10 10 8z" fill="#0b4890" />
        </Svg>
      </TaskIcon>
      <TaskIcon className="ml-[20px] w-[24px]" dot>
        <Svg w={24} h={24}>
          <rect width="24" height="24" rx="2" fill="#484848" />
          <path d="M18.500 4v4.500L11 11l7.500 2.300v4.500L5.500 21v-4.500l7.500-2.300-7.500-2.300V7.500z" fill="#ff9800" />
        </Svg>
      </TaskIcon>
      <div className="relative ml-[12px] flex h-[40px] w-[40px] items-center justify-center rounded-[5px] border border-[#3d3442] bg-[#352c3a]">
        <Svg w={25} h={22} className="mb-px">
          <path d="M7 1h18v20H7z" fill="#21a366" />
          <path d="M7 1h9v5H7z" fill="#1c8f57" />
          <path d="M16 1h9v5h-9z" fill="#33c481" />
          <path d="M7 11h9v5H7zM7 6h9v5H7z" fill="#107c41" />
          <path d="M7 16h18v5H7z" fill="#185c37" />
          <path d="M16 11h9v5h-9z" fill="#107c41" />
          <rect y="5" width="12.500" height="13" rx="1" fill="#107c41" />
          <path d="M3.500 8l5.500 7M9 8l-5.500 7" stroke="#fff" strokeWidth="1.800" />
        </Svg>
        <div className="absolute bottom-0 h-[3px] w-[16px] rounded-full bg-[#4cc2ff]" />
      </div>
      <Svg w={11} h={7} className="ml-[378px]"><path d="M.8 6l4.700-4.700L10.200 6" stroke="#fff" strokeWidth="1.500" /></Svg>
      <div className="ml-[21px] flex flex-col items-center leading-[16px]">
        <T className="w-[24px]">ENG</T>
        <T className="w-[24px]">INTL</T>
      </div>
      <Svg w={16} h={13} className="ml-[18px] mt-[-2px]">
        <path d="M.8 5a10.200 10.200 0 0 1 14.400 0M3 7.300a7 7 0 0 1 10 0M5.300 9.600a3.800 3.800 0 0 1 5.400 0" stroke="#fff" strokeWidth="1.200" />
        <circle cx="8" cy="11.500" r="1.300" fill="#fff" />
      </Svg>
      <Svg w={17} h={14} className="ml-[8px] mt-[-2px]">
        <path d="M.6 5v4h2.700L7 12.500v-11L3.300 5z" stroke="#fff" strokeWidth="1.100" />
        <path d="M9 5a3 3 0 0 1 0 4M11 3a6 6 0 0 1 0 8M13 1a9 9 0 0 1 0 12" stroke="#fff" strokeWidth="1.200" />
      </Svg>
      <div className="ml-[15px] flex flex-col items-end leading-[16px]">
        <T className="w-[44px]">4:29 AM</T>
        <T className="w-[56px]">11/9/2024</T>
      </div>
      <Svg w={15} h={16} className="ml-[7px]">
        <path d="M7.500 0a5 5 0 0 1 5 5v4.500l1.800 2.500v.8H.7V12l1.800-2.500V5a5 5 0 0 1 5-5zM5.300 14h4.400a2.200 2.200 0 0 1-4.400 0z" fill="#8fe3ff" />
      </Svg>
    </div>
  );
}

export default function App() {
  return (
    <div className="flex h-[1080px] w-[1920px] flex-col overflow-hidden bg-[#262626] font-['Open_Sans',sans-serif]">
      <TitleBar />
      <Tabs />
      <Ribbon />
      <FormulaBar />
      <div className="flex h-[780px] shrink-0">
        <div className="flex w-[1899px] flex-col">
          <ColumnHeaders />
          <Sheet />
        </div>
        <div className="ml-[3px] mt-[2px] flex h-[779px] w-[15px] flex-col bg-[#0a0a0a]">
          <ScrollButton className="h-[15px]" d="M0 6h8L4 2z" />
          <div className="h-[247px] border border-[#6a6a6a] bg-[#363636]" />
          <div className="flex-1" />
          <ScrollButton className="h-[15px]" d="M0 2h8L4 6z" />
        </div>
      </div>
      <SheetTabs />
      <StatusBar />
      <Taskbar />
    </div>
  );
}
